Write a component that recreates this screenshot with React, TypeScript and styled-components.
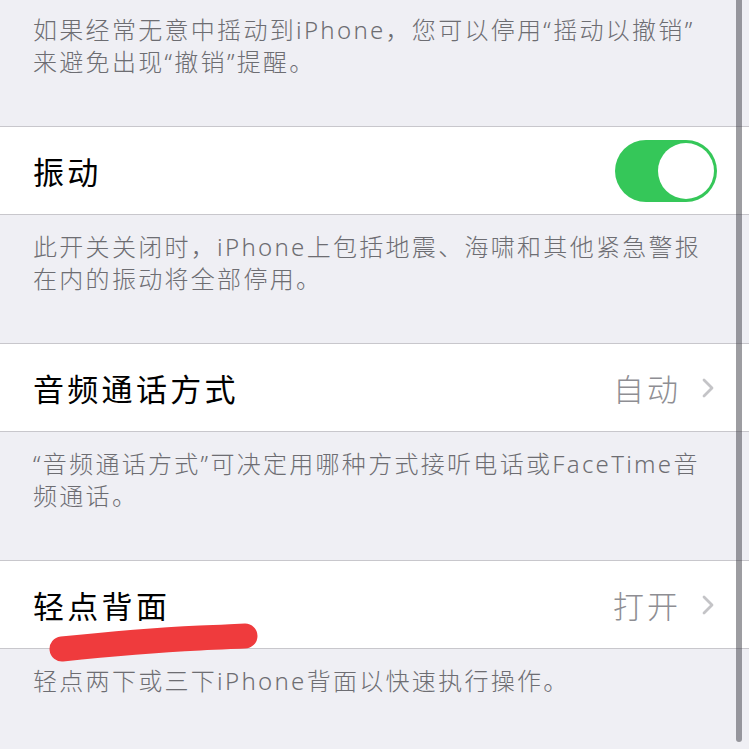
import styled, { createGlobalStyle } from "styled-components";

const GlobalStyle = createGlobalStyle`
  html, body {
    margin: 0;
    padding: 0;
    background: #efeff4;
  }
  body {
    font-family: "Noto Sans", "Noto Sans CJK SC", "Liberation Sans", sans-serif;
    -webkit-font-smoothing: antialiased;
  }
`;

const Page = styled.div`
  position: relative;
  width: 749px;
  height: 749px;
  overflow: hidden;
  background: #efeff4;
`;

const Footer = styled.div<{ $top?: number }>`
  box-sizing: border-box;
  height: ${({ $top }) => ($top !== undefined ? "126px" : "128px")};
  padding: ${({ $top }) => ($top ?? 16)}px 40px 0 33px;
  font-size: 24px;
  font-weight: 300;
  line-height: 32px;
  letter-spacing: 2.3px;
  color: #6d6d72;
  white-space: nowrap;
`;

const Cell = styled.div`
  box-sizing: border-box;
  height: 89px;
  display: flex;
  align-items: center;
  justify-content: space-between;
  padding: 0 32px 0 33px;
  background: #fff;
  border-top: 1px solid #c8c7cc;
  border-bottom: 1px solid #c8c7cc;
`;

const Title = styled.span`
  font-size: 31px;
  letter-spacing: 3.3px;
  color: #000;
`;

const Detail = styled.span`
  display: flex;
  align-items: center;
  gap: 20px;
  font-size: 31px;
  font-weight: 300;
  letter-spacing: 3px;
  color: #8e8e93;
  margin-right: 2px;
`;

const Toggle = styled.div<{ $on: boolean }>`
  box-sizing: border-box;
  width: 102px;
  height: 62px;
  border-radius: 31px;
  padding: 3px;
  display: flex;
  justify-content: ${({ $on }) => ($on ? "flex-end" : "flex-start")};
  background: ${({ $on }) => ($on ? "#35c759" : "#e5e5ea")};
`;

const Knob = styled.div`
  width: 56px;
  height: 56px;
  border-radius: 50%;
  background: #fff;
`;

const ScrollIndicator = styled.div`
  position: absolute;
  top: 0;
  right: 7px;
  width: 6px;
  height: 742px;
  border-radius: 0 0 3px 3px;
  background: rgba(60, 60, 67, 0.5);
`;

const Scribble = styled.svg`
  position: absolute;
  left: 0;
  top: 0;
  pointer-events: none;
`;

const Chevron = () => (
  <svg width="14" height="20" viewBox="0 0 14 20">
    <path
      d="M3 2 L11 10 L3 18"
      fill="none"
      stroke="#c4c4c7"
      strokeWidth="2.8"
      strokeLinecap="round"
      strokeLinejoin="round"
    />
  </svg>
);

const LinkCell = ({ title, value }: { title: string; value: string }) => (
  <Cell>
    <Title>{title}</Title>
    <Detail>
      {value}
      <Chevron />
    </Detail>
  </Cell>
);

export default function App() {
  return (
    <Page>
      <GlobalStyle />
      <Footer $top={14}>
        如果经常无意中摇动到iPhone，您可以停用“摇动以撤销”
        <br />
        来避免出现“撤销”提醒。
      </Footer>
      <Cell>
        <Title>振动</Title>
        <Toggle $on>
          <Knob />
        </Toggle>
      </Cell>
      <Footer>
        此开关关闭时，iPhone上包括地震、海啸和其他紧急警报
        <br />
        在内的振动将全部停用。
      </Footer>
      <LinkCell title="音频通话方式" value="自动" />
      <Footer>
        “音频通话方式”可决定用哪种方式接听电话或FaceTime音
        <br />
        频通话。
      </Footer>
      <LinkCell title="轻点背面" value="打开" />
      <Footer>轻点两下或三下iPhone背面以快速执行操作。</Footer>
      <ScrollIndicator />
      <Scribble width="749" height="749" viewBox="0 0 749 749">
        <path
          d="M62 649 C110 644 160 640 200 638 C225 637 240 636 245 636"
          fill="none"
          stroke="#ef3b3d"
          strokeWidth="25"
          strokeLinecap="round"
        />
      </Scribble>
    </Page>
  );
}
